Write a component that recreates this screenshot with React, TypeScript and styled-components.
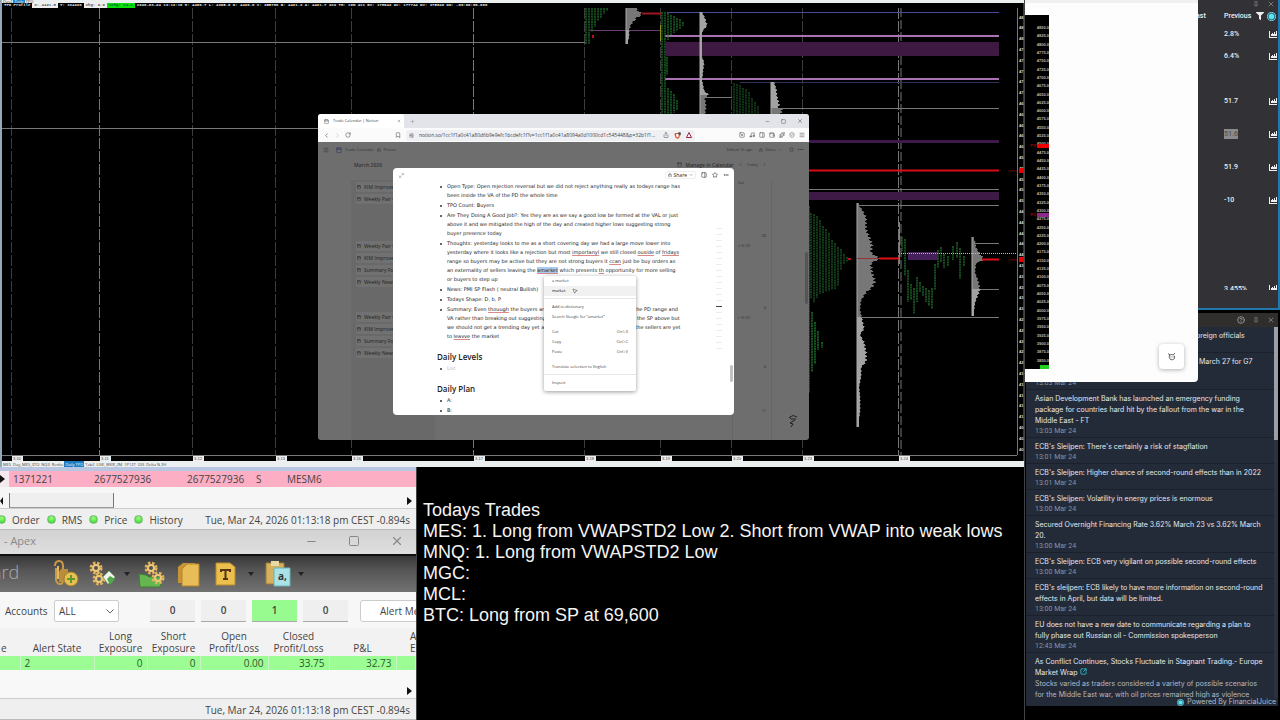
import React from "react";
import styled, { createGlobalStyle, css } from "styled-components";
import {
  Bookmark, Calendar, ChevronDown, ChevronLeft, ChevronRight, Ellipsis, Maximize2, Menu as MenuIcon, Minus,
  Music, PanelRight, Pin, Plus, RotateCw, Share, ShieldCheck, SlidersHorizontal, Sparkles, Square, SquareArrowOutUpRight,
  SquareX, Star, Wallet, X, CircleHelp, Lock, MousePointer2,
} from "lucide-react";
import { FaFilter } from "react-icons/fa";

const GlobalStyle = createGlobalStyle`
  * { box-sizing: border-box; }
  body { margin: 0; background: #000; font-family: "Open Sans", "Noto Sans", sans-serif; }
  button, select { font: inherit; color: inherit; }
  button { border: 0; padding: 0; background: none; display: inline-flex; align-items: center; }
  ul, p, h2, table { margin: 0; padding: 0; }
  ul { list-style: none; }
  svg { display: block; flex: none; }
`;

/* ---------- page frame ---------- */

const Desktop = styled.div`
  display: grid;
  grid-template-columns: minmax(0, 1fr) 256px;
  min-height: 100vh;
  background: #000;
`;

const LeftSide = styled.div`
  display: flex;
  flex-direction: column;
  min-width: 0;
`;

const LowerRow = styled.div`
  display: grid;
  grid-template-columns: 417px minmax(0, 1fr);
  flex: 1;
`;

/* ---------- profile chart ---------- */

const ChartPane = styled.section`
  position: relative;
  display: flex;
  flex-direction: column;
  border-left: 2px solid #93a9ba;
`;

const TabStrip = styled.div<{ $height: number }>`
  display: flex;
  align-items: center;
  height: ${(p) => p.$height}px;
  background: #ecefef;
  color: #444;
  font-size: 4px;
  line-height: 5px;
  overflow: hidden;
  white-space: nowrap;
`;

const SheetTab = styled.button<{ $active?: boolean }>`
  padding: 0 1px;
  height: 100%;
  ${(p) => p.$active && css`background: #1c7cc4; color: #fff;`}
`;

const ChartDrawing = styled.svg`
  width: 100%;
  height: 458px;
`;

const StatusLine = styled.div`
  position: absolute;
  top: 3px;
  left: 0;
  display: flex;
  height: 5px;
  font: bold 4px/5px "Liberation Mono", monospace;
  color: #e8e8e8;
  white-space: pre;
`;

const StatusCell = styled.span<{ $tone?: "white" | "green" }>`
  padding: 0 2px;
  ${(p) => p.$tone === "white" && css`background: #eee; color: #555;`}
  ${(p) => p.$tone === "green" && css`background: #08e008; color: #064;`}
`;

type Key = [number, number];

const widthAt = (keys: Key[], y: number) => {
  for (let i = 1; i < keys.length; i++) {
    if (y <= keys[i][0]) {
      const [y0, w0] = keys[i - 1];
      const [y1, w1] = keys[i];
      return w0 + ((w1 - w0) * (y - y0)) / (y1 - y0);
    }
  }
  return keys[keys.length - 1][1];
};

const volumePath = (x: number, keys: Key[]) => {
  const top = keys[0][0];
  const bottom = keys[keys.length - 1][0];
  let d = `M${x} ${top}`;
  for (let y = top; y < bottom; y += 1) {
    const base = widthAt(keys, y);
    const w = Math.max(2, base + Math.sin(y * 1.7) * Math.min(1.4, base * 0.12));
    d += `H${(x + w).toFixed(1)}V${y + 1}`;
  }
  return `${d}H${x}Z`;
};

const Volume = ({ x, keys, split }: { x: number; keys: Key[]; split: number }) => {
  const id = `vol${x}-${split}`;
  return (
    <g>
      <clipPath id={id}><rect x={x - 2} y={split} width="60" height="400" /></clipPath>
      <path d={volumePath(x, keys)} fill="#777" />
      <path d={volumePath(x, keys)} fill="#a2a2a2" clipPath={`url(#${id})`} />
      <line x1={x} x2={x} y1={keys[0][0]} y2={keys[keys.length - 1][0]} stroke="#aaa" />
    </g>
  );
};

const Letters = ({ columns, color = "#1d6b28" }: { columns: [number, number, number][]; color?: string }) => (
  <g stroke={color} strokeWidth="1.4" strokeDasharray="2 .6">
    {columns.map(([x, a, b], i) => <line key={i} x1={x} x2={x} y1={a} y2={b} />)}
  </g>
);

const sessions = [12, 100, 193, 276, 352, 474, 585, 661, 732, 803, 899];
const brightSessions = [100, 474, 899];
const sessionNames = ["3-10", "3-11", "3-12", "3-13", "3-16", "3-17", "3-18", "3-19", "3-20", "3-23", "3-24"];
const priceTicks = Array.from({ length: 41 }, (_, i) => ({ y: 17 + i * 10.8, label: String(48 - Math.round(i / 5)) }));

const monday: [number, number, number][] = [
  [811, 213, 298], [814, 214, 303], [817, 216, 298], [820, 220, 294], [823, 226, 293], [826, 229, 292], [829, 233, 291],
  [832, 240, 290], [835, 243, 289], [838, 247, 286], [841, 249, 270], [844, 254, 264], [847, 257, 262],
];
const tuesday: [number, number, number][] = [
  [902, 237, 251], [905, 239, 276], [908, 270, 302], [911, 284, 300], [914, 288, 314], [917, 277, 302], [920, 282, 292],
  [923, 286, 296], [926, 288, 302], [929, 290, 306], [932, 288, 309], [935, 264, 290], [938, 250, 268], [941, 247, 262],
  [944, 254, 268], [948, 256, 266], [953, 246, 260], [957, 242, 258], [960, 248, 279], [964, 256, 266],
];

const ProfileChart = () => (
  <ChartDrawing viewBox="2 3 1022 458" preserveAspectRatio="none" aria-label="TPO profile chart">
    <rect x="0" y="0" width="1024" height="461" fill="#000" />
    {sessions.map((x) => (
      <line key={x} x1={x - 0.5} x2={x - 0.5} y1="8" y2="455" stroke={brightSessions.includes(x) ? "#777" : "#3c3c3c"} strokeDasharray="11 2" />
    ))}
    <line x1="901" x2="901" y1="8" y2="455" stroke="#3c3c3c" strokeWidth="2" strokeDasharray="9 3" />
    <path d="M2 42.5H585M2 128.5H320" stroke="#777" />

    <rect x="666" y="42" width="333" height="14" fill="#3e1a42" />
    <rect x="740" y="140" width="259" height="3" fill="#3e1a4a" />
    <rect x="740" y="192" width="259" height="8" fill="#3e1a46" />
    <path d="M667 12.5H999" stroke="#4a4a9c" />
    <path d="M665 36H999M665 79H999" stroke="#a872b2" strokeWidth="2" />
    <path d="M740 82.5H999" stroke="#30305c" />
    <path d="M590 30.5H661" stroke="#6a3d70" />
    <path d="M702 97.5H732M771 108.5H999M808 189.5H999M857 205.5H999M857 317.5H999M974 243.5H999M974 289.5H999" stroke="#777" />
    <path d="M808 170.5H999" stroke="#d80d18" strokeWidth="2" />
    <path d="M642 13.5H661" stroke="#9a1a20" strokeWidth="2" />

    <Letters columns={[[586, 8, 44], [589, 8, 44], [592, 8, 32], [595, 8, 27], [598, 8, 21], [601, 8, 18], [604, 8, 14], [607, 8, 11]]} />
    <Letters columns={[[662, 12, 114], [665, 12, 114], [668, 13, 40], [671, 15, 35], [674, 16, 33], [677, 18, 31], [680, 19, 29], [683, 22, 26], [667, 57, 75], [668, 88, 114], [671, 91, 114], [674, 94, 113], [677, 100, 110]]} />
    <Letters color="#154a1e" columns={[[734, 83, 114], [737, 84, 114], [740, 85, 114], [743, 88, 114], [746, 89, 114], [749, 92, 114], [752, 98, 114], [755, 102, 114], [758, 106, 114]]} />
    <path d="M660.5 25V41" stroke="#8f8a1c" />
    <Letters color="#1f7a2e" columns={[[809, 206, 393], [812, 312, 372], [815, 322, 364], [818, 331, 350], [822, 342, 348]]} />
    <Letters columns={monday} color="#1a5524" />
    <Letters columns={tuesday} color="#216b2b" />
    <path d="M899.5 222V264" stroke="#5fa52c" />
    <rect x="908" y="252" width="30" height="8" fill="#45205a" />

    <Volume x={626} split={30} keys={[[8, 10], [12, 14], [14, 16], [17, 11], [24, 5], [30, 3], [36, 3], [44, 1]]} />
    <Volume x={700} split={0} keys={[[12, 2], [18, 5], [25, 7], [30, 3], [34, 1], [54, 1], [62, 4], [70, 3], [80, 2], [90, 4], [95, 9]]} />
    <Volume x={700} split={114} keys={[[95, 8], [98, 5], [106, 6], [114, 5]]} />
    <Volume x={771} split={0} keys={[[82, 3], [88, 5], [96, 6], [104, 8], [108, 7]]} />
    <Volume x={771} split={114} keys={[[108, 12], [112, 10], [114, 9]]} />
    <Volume x={857} split={317} keys={[[203, 0], [209, 5], [217, 9], [229, 9], [236, 12], [244, 15], [252, 14], [258, 22], [263, 14], [272, 15], [281, 18], [287, 15], [292, 9], [300, 4], [309, 3], [319, 5], [328, 7], [334, 3], [342, 7], [352, 9], [361, 9], [367, 4], [376, 4], [386, 2], [398, 3], [410, 3], [418, 2], [427, 0]]} />
    <Volume x={972} split={289} keys={[[237, 0], [241, 3], [247, 4], [252, 7], [259, 12], [263, 4], [272, 3], [280, 6], [289, 8], [294, 6], [302, 3], [316, 1]]} />
    <path d="M857 258.5H879" stroke="#9c3030" />
    <path d="M879 258.5H899M982 259.5H999" stroke="#e00f18" strokeWidth="2" />
    <path d="M899 253.5H1018" stroke="#b8b8b8" strokeDasharray="1 1" />
    <rect x="848" y="258" width="3" height="2" fill="#b1141c" />
    <rect x="592" y="35" width="2" height="3" fill="#b1141c" />

    <path d="M2 455.5H1017M1017.5 8V455M1024 3V461" stroke="#777" />
    {priceTicks.map((t) => <text key={t.y} x="1019" y={t.y + 1.5} fill="#ddd" fontSize="4" fontWeight="bold" fontFamily="Liberation Sans">{t.label}</text>)}
    <rect x="1019" y="168" width="5" height="5" fill="#e00" />
    <rect x="1019" y="257" width="5" height="5" fill="#e00" />
    <g fill="#a00" fontSize="4" fontFamily="Liberation Mono"><text x="1008" y="172">VPOC</text><text x="1008" y="261">VPOC</text></g>
    {sessions.map((x, i) => (
      <g key={x}>
        <rect x={x} y="456" width="11" height="5" fill="#eee" />
        <text x={x + 1} y="460" fill="#444" fontSize="4" fontFamily="Liberation Sans">{sessionNames[i]}</text>
      </g>
    ))}
  </ChartDrawing>
);

/* ---------- browser window ---------- */

const BrowserWindow = styled.section`
  position: absolute;
  top: 114px;
  left: 316px;
  width: 491px;
  height: 326px;
  display: flex;
  flex-direction: column;
  border-radius: 3px;
  overflow: hidden;
  background: #6e6e6e;
  color: #444;
  font-size: 4px;
  line-height: 6px;
`;

const TabBar = styled.div`
  display: flex;
  align-items: center;
  justify-content: space-between;
  height: 14px;
  background: #e3e4e9;
`;

const Group = styled.div<{ $gap: number; $pad?: string }>`
  display: flex;
  align-items: center;
  gap: ${(p) => p.$gap}px;
  padding: ${(p) => p.$pad ?? 0};
`;

const PageTab = styled.button`
  width: 86px;
  height: 14px;
  padding: 0 3px 0 6px;
  gap: 4px;
  background: #fff;
  border-radius: 3px 3px 0 0;
  svg:last-child { margin-left: auto; }
`;

const Toolbar = styled.div`
  display: flex;
  align-items: center;
  justify-content: space-between;
  height: 14px;
  padding: 0 4px 0 5px;
  background: #fbfbfc;
`;

const AddressBox = styled.div`
  display: flex;
  align-items: center;
  gap: 5px;
  width: 289px;
  height: 11px;
  padding: 0 3px;
  border-radius: 3px;
  background: #eff0f4;
  font-size: 5px;
  span { flex: 1; overflow: hidden; white-space: nowrap; text-overflow: ellipsis; }
`;

const Backdrop = styled.div`
  position: relative;
  flex: 1;
  display: flex;
  flex-direction: column;
  color: #333;
`;

const BackdropBar = styled.div<{ $pad: string }>`
  display: flex;
  align-items: center;
  justify-content: space-between;
  height: 15px;
  padding: ${(p) => p.$pad};
  strong { font-size: 5px; font-weight: 600; }
`;

const CalendarBoard = styled.div`
  display: flex;
  justify-content: space-between;
  flex: 1;
  padding: 8px 37px 0 33px;
`;

const EntryColumn = styled.ul`
  width: 84px;
  padding: 0 5px;
  background: #696969;
`;

const Entry = styled.li<{ $before?: number }>`
  display: flex;
  align-items: center;
  gap: 3px;
  height: 10px;
  margin-top: ${(p) => p.$before ?? 2}px;
  padding-left: 1px;
  color: #222;
  font-size: 5px;
  white-space: nowrap;
  background: #717171;
`;

const DayColumn = styled.ul`
  width: 40px;
  padding: 0 5px;
  border-left: 1px solid #666;
  border-right: 1px solid #666;
  text-align: right;
`;

const Day = styled.li<{ $height: number; $left?: boolean }>`
  height: ${(p) => p.$height}px;
  text-align: ${(p) => (p.$left ? "left" : "right")};
`;

const BackdropThumb = styled.div`
  position: absolute;
  top: 110px;
  right: 1px;
  width: 3px;
  height: 52px;
  border-radius: 2px;
  background: #555;
`;

const CornerIcon = styled.div`
  position: absolute;
  right: 11px;
  bottom: 12px;
`;

const PageModal = styled.article`
  position: absolute;
  top: 26px;
  left: 75px;
  width: 341px;
  height: 247px;
  overflow: hidden;
  border-radius: 4px;
  background: #fff;
  color: #222;
`;

const ModalBar = styled.header`
  display: flex;
  align-items: center;
  justify-content: space-between;
  height: 14px;
  padding: 0 5px 0 6px;
`;

const ShareButton = styled.button`
  gap: 2px;
  height: 8px;
  padding: 0 2px;
  border: 1px solid #eee;
  border-radius: 2px;
  font-size: 5px;
`;

const ModalBody = styled.div`
  padding: 0 44px;
  font-family: "DejaVu Sans", "Open Sans", sans-serif;
  font-size: 5px;
  line-height: 9px;
  h2 { font-family: "Open Sans", sans-serif; font-size: 8px; line-height: 10px; font-weight: 600; margin: 11px 0 2px; }
`;

const Bullets = styled.ul`
  display: flex;
  flex-direction: column;
  gap: 1px;
  li { position: relative; padding-left: 10px; white-space: pre; }
  li::before {
    content: "";
    position: absolute;
    left: 3px;
    top: 4px;
    width: 2px;
    height: 2px;
    border-radius: 1px;
    background: #333;
  }
`;

const Misspelt = styled.u`
  text-decoration: underline;
  text-decoration-color: #d88;
`;

const Selected = styled.mark`
  background: #a9cdf2;
  color: inherit;
  text-decoration: underline;
  text-decoration-color: #d88;
`;

const Placeholder = styled.span`
  color: #bbb;
`;

const Outline = styled.ul`
  position: absolute;
  top: 60px;
  right: 12px;
  display: flex;
  flex-direction: column;
  gap: 5px;
`;

const OutlineMark = styled.li<{ $active?: boolean }>`
  width: 6px;
  height: 1px;
  background: ${(p) => (p.$active ? "#444" : "#ececec")};
`;

const ModalThumb = styled.div`
  position: absolute;
  right: 1px;
  bottom: 33px;
  width: 3px;
  height: 17px;
  border-radius: 2px;
  background: #c2c2c2;
`;

const ContextMenu = styled.ul`
  position: absolute;
  top: 134px;
  left: 226px;
  width: 92px;
  height: 115px;
  background: #fff;
  color: #444;
  border-radius: 2px;
  box-shadow: 0 1px 4px rgba(0, 0, 0, 0.4);
`;

const MenuItem = styled.li<{ $hover?: boolean; $before?: number; $rule?: boolean }>`
  margin-top: ${(p) => p.$before ?? 0}px;
  ${(p) => p.$rule && css`border-top: 1px solid #e6e6e6; padding-top: 3px;`}
  button {
    width: 100%;
    height: 10px;
    padding: 0 8px;
    justify-content: space-between;
    background: ${(p) => (p.$hover ? "#f1f1f1" : "none")};
    color: ${(p) => (p.$hover ? "#000" : "inherit")};
  }
`;

const Pointer = styled.div`
  position: absolute;
  top: 146px;
  left: 254px;
`;

const url = "notion.so/1cc1f1a0c41a80d6b9e9efc1bcdefc1f?v=1cc1f1a0c41a8094a0d1000cd1c545448&p=32b1f1a0c41a8094";

const NotionWindow = () => (
  <BrowserWindow>
    <TabBar>
      <Group $gap={6}>
        <PageTab><Calendar size={5} />Trade Calendar | Notion<X size={4} /></PageTab>
        <button aria-label="New tab"><Plus size={5} color="#888" /></button>
      </Group>
      <Group $gap={11} $pad="0 6px 0 0"><Minus size={5} /><Square size={5} /><X size={6} /></Group>
    </TabBar>
    <Toolbar>
      <Group $gap={4}><ChevronLeft size={7} /><ChevronRight size={7} color="#bbb" /><RotateCw size={6} /></Group>
      <Group $gap={5}>
        <Bookmark size={6} />
        <AddressBox>
          <SlidersHorizontal size={5} /><span>{url}</span><Share size={6} />
          <svg width="7" height="7" viewBox="0 0 14 14"><path d="M2 2h10l1 4-3 6-3 2-4-3-2-6z" fill="#e4552c" /><path d="M4 4h6l-1 5-2 2-2-2z" fill="#fff" /><circle cx="11" cy="3" r="3" fill="#555" /></svg>
          <svg width="6" height="6" viewBox="0 0 12 12"><path d="M6 1 11 11H1Z" fill="#fff" stroke="#a32142" strokeWidth="2" /></svg>
        </AddressBox>
      </Group>
      <Group $gap={4}><SquareX size={6} /><Music size={6} /><PanelRight size={6} /><Wallet size={6} /><Sparkles size={6} /><ShieldCheck size={6} /><MenuIcon size={6} /></Group>
    </Toolbar>
    <Backdrop>
      <BackdropBar $pad="0 5px 0 5px">
        <Group $gap={3}><MenuIcon size={6} /><Group $gap={3} $pad="0 0 0 4px"><Calendar size={6} color="#2a3060" />Trade Calendar<Lock size={4} />Private</Group></Group>
        <Group $gap={3}><span>Edited 1h ago</span><Group $gap={2} $pad="0 4px"><Lock size={4} />Share<ChevronDown size={4} /></Group><Star size={5} /><Ellipsis size={7} /></Group>
      </BackdropBar>
      <BackdropBar $pad="0 42px 0 36px">
        <strong>March 2026</strong>
        <Group $gap={4}><Calendar size={5} /><strong>Manage in Calendar</strong><ChevronLeft size={5} /><span>Today</span><ChevronRight size={5} /></Group>
      </BackdropBar>
      <CalendarBoard>
        <EntryColumn>
          <Entry><Calendar size={4} />KIM Improvement</Entry>
          <Entry><Calendar size={4} />Weekly Pair Outlook</Entry>
          <Entry $before={37}><Calendar size={4} />Weekly Pair Outlook</Entry>
          <Entry><Calendar size={4} />KIM Improvement</Entry>
          <Entry><Calendar size={4} />Summary For Week</Entry>
          <Entry><Calendar size={4} />Weekly News</Entry>
          <Entry $before={25}><Calendar size={4} />Weekly Pair Outlook</Entry>
          <Entry><Calendar size={4} />KIM Improvement</Entry>
          <Entry><Calendar size={4} />Summary For Week</Entry>
          <Entry><Calendar size={4} />Weekly News</Entry>
        </EntryColumn>
        <DayColumn>
          <Day $height={53} $left>Sat</Day>
          <Day $height={10}>28</Day>
          <Day $height={62} $left>s % (3)</Day>
          <Day $height={10}>4</Day>
          <Day $height={49} $left>r % (2)</Day>
          <Day $height={44}>4</Day>
          <Day $height={8}>11</Day>
        </DayColumn>
      </CalendarBoard>
      <BackdropThumb />
      <CornerIcon><svg width="10" height="14" viewBox="0 0 10 14" fill="none" stroke="#222"><path d="M2 3q3-3 7 0M3 5h5M7 6 2 9l3 1-2 3M1 3l2 2" /></svg></CornerIcon>
      <PageModal>
        <ModalBar>
          <Maximize2 size={5} color="#777" />
          <Group $gap={5}><ShareButton><Lock size={4} />Share<ChevronDown size={4} /></ShareButton><PanelRight size={6} /><Star size={6} /><Ellipsis size={6} /></Group>
        </ModalBar>
        <ModalBody>
          <Bullets>
            <li>{"Open Type: Open rejection reversal but we did not reject anything really as todays range has\nbeen inside the VA of the PD the whole time"}</li>
            <li>TPO Count: Buyers</li>
            <li>{"Are They Doing A Good Job?: Yes they are as we say a good low be formed at the VAL or just\nabove it and we mitigated the high of the day and created higher lows suggesting strong\nbuyer presence today"}</li>
            <li>
              {"Thoughts: yesterday looks to me as a short covering day we had a large move lower into\nyesterday where it looks like a rejection but most "}<Misspelt>importanyl</Misspelt>{" we still closed "}<Misspelt>ouside</Misspelt>{" of "}<Misspelt>fridays</Misspelt>
              {"\nrange so buyers may be active but they are not strong buyers it "}<Misspelt>ccan</Misspelt>{" just be buy orders as\nan externality of sellers leaving the "}<Selected>amarket</Selected>{" which presents "}<Misspelt>th</Misspelt>{" opportunity for more selling\nor buyers to step up"}
            </li>
            <li>News: PMI SP Flash ( neutral Bullish)</li>
            <li>Todays Shape: D, b, P</li>
            <li>{"Summary: Even "}<Misspelt>thouugh</Misspelt>{" the buyers are in control we are still inside all of  the PD range and\nVA rather than breaking out suggesting that we may see more chop or test the SP above but\nwe should not get a trending day yet as it seems that both the buyers and the sellers are yet\nto "}<Misspelt>leavve</Misspelt>{" the market"}</li>
          </Bullets>
          <h2>Daily Levels</h2>
          <Bullets><li><Placeholder>List</Placeholder></li></Bullets>
          <h2>Daily Plan</h2>
          <Bullets><li>A:</li><li>B:</li></Bullets>
        </ModalBody>
        <Outline>{Array.from({ length: 21 }, (_, i) => <OutlineMark key={i} $active={i === 13} />)}</Outline>
        <ModalThumb />
      </PageModal>
      <ContextMenu>
        <MenuItem><button>a market</button></MenuItem>
        <MenuItem $hover><button>market</button></MenuItem>
        <MenuItem $rule $before={2}><button>Add to dictionary</button></MenuItem>
        <MenuItem><button>Search Google for “amarket”</button></MenuItem>
        <MenuItem $before={5}><button><span>Cut</span><span>Ctrl+X</span></button></MenuItem>
        <MenuItem><button><span>Copy</span><span>Ctrl+C</span></button></MenuItem>
        <MenuItem><button><span>Paste</span><span>Ctrl+V</span></button></MenuItem>
        <MenuItem $before={5}><button>Translate selection to English</button></MenuItem>
        <MenuItem $rule $before={2}><button>Inspect</button></MenuItem>
      </ContextMenu>
      <Pointer><MousePointer2 size={6} fill="#fff" color="#333" /></Pointer>
    </Backdrop>
  </BrowserWindow>
);

/* ---------- order window and dashboard ---------- */

const Apex = styled.section`
  display: flex;
  flex-direction: column;
  min-width: 0;
  overflow: hidden;
  border-right: 1px solid #444;
  background: #f8f8f8;
  color: #444;
  font-size: 10px;
  line-height: 12px;
  white-space: nowrap;
`;

const OrderTable = styled.table`
  width: 100%;
  table-layout: fixed;
  border-collapse: collapse;
  td { padding: 0 0 0 4px; height: 16px; background: #fcaec5; overflow: hidden; }
  td:first-child { padding: 0; background: #f5e9ee; }
  tr:first-child td { height: 4px; background: #b9c6e2; }
`;

const ScrollTrack = styled.div`
  display: flex;
  justify-content: space-between;
  align-items: center;
  height: 22px;
  padding: 6px 4px 0 0;
  background: #f6f6f6;
  border-bottom: 1px solid #ccc;
`;

const ScrollThumb = styled.div`
  width: 105px;
  height: 15px;
  margin-left: 4px;
  background: #efefef;
  border-left: 1px solid #777;
  border-right: 1px solid #777;
  border-bottom: 1px solid #999;
`;

const Arrow = styled.svg`
  width: 5px;
  height: 8px;
  fill: #111;
`;

const StatusBar = styled.div`
  display: flex;
  align-items: center;
  justify-content: space-between;
  height: 21px;
  padding: 1px 6px 0 0;
  background: #efefef;
  border-bottom: 1px solid #bbb;
`;

const Feeds = styled.div`
  display: flex;
  gap: 7px;
  margin-left: -3px;
`;

const Feed = styled.span`
  display: flex;
  align-items: center;
  gap: 6px;
`;

const Dot = styled.i`
  width: 9px;
  height: 9px;
  border-radius: 5px;
  background: radial-gradient(circle at 50% 30%, #9dff7c, #28cf28);
  border: 1px solid #7ab87a;
`;

const TitleBar = styled.div`
  display: flex;
  align-items: center;
  justify-content: space-between;
  height: 26px;
  padding: 0 12px 2px 4px;
  background: linear-gradient(#d2d2d2, #dedede);
  border-bottom: 2px solid #111;
  color: #888;
  font-size: 11px;
`;

const IconBar = styled.div`
  display: flex;
  align-items: center;
  height: 36px;
  background: linear-gradient(#383838, #565656 40%, #727272);
  color: #aaa;
  b { width: 52px; margin-left: -8px; margin-right: 8px; font-size: 18px; font-weight: 300; line-height: 20px; padding-bottom: 4px; }
`;

const Tool = styled.button<{ $after: number }>`
  margin-right: ${(p) => p.$after}px;
`;

const AccountRow = styled.div`
  display: flex;
  align-items: center;
  height: 36px;
  padding: 2px 0 0 5px;
  background: #f7f7f7;
  > * { flex: none; }
  label { width: 49px; }
  select {
    width: 65px;
    height: 22px;
    margin-right: 31px;
    padding: 0 14px 0 4px;
    border: 1px solid #ccc;
    border-radius: 2px;
    appearance: none;
    background: #fff url("data:image/svg+xml,%3Csvg xmlns='http://www.w3.org/2000/svg' width='8' height='5' fill='none' stroke='%23666'%3E%3Cpath d='M0.5 0.5 4 4 7.5 0.5'/%3E%3C/svg%3E") no-repeat right 4px center;
  }
`;

const CountBox = styled.output<{ $on?: boolean }>`
  width: 45px;
  height: 22px;
  margin-right: 6px;
  padding-top: 4px;
  text-align: center;
  font-weight: 600;
  background: ${(p) => (p.$on ? "#97fb8f" : "#efefef")};
  border-bottom: 1px solid #aaa;
`;

const AlertButton = styled.button`
  width: 90px;
  height: 22px;
  margin-left: 6px;
  padding-left: 19px;
  border: 1px solid #ccc;
  border-radius: 3px;
  background: #fff;
`;

const AccountTable = styled.table`
  width: 100%;
  table-layout: fixed;
  border-collapse: collapse;
  th { height: 28px; padding: 0 0 2px; font-weight: 400; vertical-align: bottom; background: #f2f2f2; overflow: hidden; line-height: 12px; white-space: pre; }
  th:first-child { text-align: left; padding-left: 1px; }
  th:last-child { text-align: left; padding-left: 14px; }
  td { height: 14px; padding: 0 4px; text-align: right; background: #9bfd93; border-right: 1px solid #c8f5c4; color: #2c5a2c; }
  td:nth-child(2) { text-align: left; }
`;

const GridRest = styled.div`
  display: flex;
  justify-content: flex-end;
  align-items: flex-end;
  flex: 1;
  padding: 0 4px 3px 0;
  border-bottom: 1px solid #ccc;
`;

const clock = "Tue, Mar 24, 2026 01:13:18 pm CEST -0.894s";

const Gear = ({ x, y, r }: { x: number; y: number; r: number }) => (
  <g>
    <circle cx={x} cy={y} r={r} fill="none" stroke="#e2b35c" strokeWidth="3" strokeDasharray="2.4 1.6" />
    <circle cx={x} cy={y} r={r - 2} fill="none" stroke="#edc878" strokeWidth="2" />
  </g>
);

const Caret = () => <svg width="6" height="4" viewBox="0 0 6 4"><path d="M0 0h6L3 4z" fill="#222" /></svg>;

const ApexPanel = () => (
  <Apex>
    <OrderTable>
      <colgroup><col width="9" /><col width="81" /><col width="93" /><col width="69" /><col width="31" /><col /></colgroup>
      <tbody>
        <tr><td /><td /><td /><td /><td /><td /></tr>
        <tr><td><Arrow viewBox="0 0 5 8"><path d="M0 0 5 4 0 8z" /></Arrow></td><td>1371221</td><td>2677527936</td><td>2677527936</td><td>S</td><td>MESM6</td></tr>
      </tbody>
    </OrderTable>
    <ScrollTrack>
      <Group $gap={0}><Arrow viewBox="0 0 5 8"><path d="M3 0 0 4l3 4z" /></Arrow><ScrollThumb /></Group>
      <Arrow viewBox="0 0 5 8"><path d="M0 0 5 4 0 8z" /></Arrow>
    </ScrollTrack>
    <StatusBar>
      <Feeds>
        <Feed><Dot />Order</Feed><Feed><Dot />RMS</Feed><Feed><Dot />Price</Feed><Feed><Dot />History</Feed>
      </Feeds>
      <span>{clock}</span>
    </StatusBar>
    <TitleBar>
      <span>- Apex</span>
      <Group $gap={30}>
        <button aria-label="Minimize"><Minus size={13} strokeWidth={2} /></button>
        <button aria-label="Maximize"><Square size={12} strokeWidth={2} /></button>
        <button aria-label="Close"><X size={14} strokeWidth={2} /></button>
      </Group>
    </TitleBar>
    <IconBar>
      <b>ard</b>
      <Tool $after={8} aria-label="Attach">
        <svg width="28" height="28" viewBox="0 0 28 28"><path d="M3 6q0-5 4-5t4 5v14q0 4-3 4t-4-4V8" fill="none" stroke="#c99a45" strokeWidth="2" /><path d="M9 9h7v13H7V12z" fill="#b98d3c" /><path d="M6 6v13" stroke="#e0b764" strokeWidth="2" /><circle cx="19" cy="19" r="7" fill="#e8bf55" stroke="#a27c22" /><path d="M15 19h8M19 15v8" stroke="#5f9a30" strokeWidth="2" /></svg>
      </Tool>
      <Tool $after={8} aria-label="Export settings">
        <svg width="28" height="28" viewBox="0 0 28 28"><Gear x={8} y={8} r={5} /><Gear x={11} y={19} r={5} /><path d="m15 17 6-6 6 6-7 7z" fill="#f1f5ee" stroke="#8ab87c" /><path d="m19 19 3-3 5 3-5 6z" fill="#52a54a" /></svg>
      </Tool>
      <Tool $after={8} aria-label="More exports"><Caret /></Tool>
      <Tool $after={10} aria-label="Import settings">
        <svg width="28" height="28" viewBox="0 0 28 28"><path d="m1 14 7 1 3 2h14l-3 10H2z" fill="#64b64e" stroke="#3d8132" /><Gear x={13} y={8} r={5} /><Gear x={20} y={18} r={5} /></svg>
      </Tool>
      <Tool $after={14} aria-label="Copy">
        <svg width="24" height="26" viewBox="0 0 24 26"><path d="M2 6 7 2h12v20H2z" fill="#c89536" /><path d="m6 8 5-5h12v22H6z" fill="#e8bd58" stroke="#b58428" /></svg>
      </Tool>
      <Tool $after={12} aria-label="Template">
        <svg width="22" height="24" viewBox="0 0 22 24"><path d="M2 1h14l5 4v18H2z" fill="#eabf4e" stroke="#b98c28" /><path d="M7 10V8h9v2M11.5 8v9M9 17h5" fill="none" stroke="#56360f" strokeWidth="2" /></svg>
      </Tool>
      <Tool $after={10} aria-label="Template menu"><Caret /></Tool>
      <Tool $after={6} aria-label="Paste">
        <svg width="28" height="28" viewBox="0 0 28 28"><path d="M2 3h18v21H2z" fill="#d5b05f" stroke="#9d7a32" /><path d="M7 1h8v5H7z" fill="#e8d9a0" /><path d="M10 8h16v18H10z" fill="#a9e3e6" stroke="#6bb4bb" /><text x="14" y="20" fontSize="10" fontWeight="bold" fill="#333">a,</text></svg>
      </Tool>
      <Tool $after={0} aria-label="Paste menu"><Caret /></Tool>
    </IconBar>
    <AccountRow>
      <label htmlFor="accounts">Accounts</label>
      <select id="accounts"><option>ALL</option></select>
      <CountBox>0</CountBox><CountBox>0</CountBox><CountBox $on>1</CountBox><CountBox>0</CountBox>
      <AlertButton>Alert Messages</AlertButton>
    </AccountRow>
    <AccountTable>
      <colgroup><col width="20" /><col width="74" /><col width="53" /><col width="53" /><col width="68" /><col width="61" /><col width="67" /><col /></colgroup>
      <thead><tr><th>e</th><th>Alert State</th><th>{"Long\nExposure"}</th><th>{"Short\nExposure"}</th><th>{"Open\nProfit/Loss"}</th><th>{"Closed\nProfit/Loss"}</th><th>P&amp;L</th><th>{"A\nE"}</th></tr></thead>
      <tbody><tr><td /><td>2</td><td>0</td><td>0</td><td>0.00</td><td>33.75</td><td>32.73</td><td /></tr></tbody>
    </AccountTable>
    <GridRest><Arrow viewBox="0 0 5 8"><path d="M0 0 5 4 0 8z" /></Arrow></GridRest>
    <StatusBar><span /><span>{clock}</span></StatusBar>
  </Apex>
);

/* ---------- notes ---------- */

const Notes = styled.section`
  padding: 33px 0 0 6px;
  background: #000;
  color: #f4f4f4;
  font: 18px/21px "Liberation Sans", Arial, sans-serif;
  white-space: nowrap;
  overflow: hidden;
`;

/* ---------- right column ---------- */

const RightSide = styled.aside`
  position: relative;
  display: flex;
  flex-direction: column;
  padding: 0 0 0 1px;
  border-left: 1px solid #444;
  font-family: Roboto, "Liberation Sans", sans-serif;
`;

const EconomicPanel = styled.section`
  height: 310px;
  background: #323135;
  border-right: 2px solid #2277ab;
  border-bottom: 2px solid #2277ab;
  color: #eee;
  overflow: hidden;
`;

const PanelBar = styled.div<{ $height: number }>`
  display: flex;
  align-items: center;
  justify-content: flex-end;
  gap: 8px;
  height: ${(p) => p.$height}px;
  padding: 0 3px;
  color: #999;
`;

const EventTable = styled.table`
  width: 100%;
  table-layout: fixed;
  border-collapse: collapse;
  font-size: 7px;
  line-height: 8px;
  font-weight: 500;
  text-align: left;
  th, td { padding: 0; font-weight: 500; }
  td:last-child svg { margin-left: auto; }
`;

const EventRow = styled.tr<{ $height: number }>`
  height: ${(p) => p.$height}px;
`;

const Flash = styled.span`
  display: inline-block;
  padding: 1px 0;
  background: #8b8b8b;
  color: #555;
`;

const ClippedRow = styled.div`
  display: flex;
  justify-content: space-between;
  height: 6px;
  margin-top: 68px;
  padding-left: 198px;
  font-size: 7px;
  line-height: 10px;
  font-weight: 500;
  overflow: hidden;
`;

const NewsPanel = styled.section`
  display: flex;
  flex-direction: column;
  height: 393px;
  margin: 3px 2px 0 0;
  background: #232b38;
  overflow: hidden;
`;

const NewsBar = styled(PanelBar)`
  background: #302e2d;
  flex: none;
`;

const NewsList = styled.ul`
  flex: 1;
  min-height: 0;
  overflow: hidden;
  border-right: 4px solid #2c3340;
`;

const NewsItem = styled.li<{ $indent?: number }>`
  padding: 3px 0 1px 9px;
  border-bottom: 1px solid #1a212c;
  p {
    padding-left: ${(p) => p.$indent ?? 0}px;
    font: 7px/11px Inter, "Liberation Sans", sans-serif;
    color: #e4e8ee;
    white-space: pre;
  }
  time { display: block; font-size: 7px; line-height: 10px; color: #8b93a1; }
  a { display: inline-block; color: #29c4cf; }
`;

const Summary = styled.div`
  font: 7px/11px Inter, "Liberation Sans", sans-serif;
  color: #b3bac5;
  white-space: pre;
`;

const Credit = styled.a`
  display: flex;
  justify-content: flex-end;
  align-items: center;
  gap: 3px;
  flex: none;
  height: 8px;
  padding-right: 2px;
  color: #b7bdc7;
  font: 7px/8px Inter, "Liberation Sans", sans-serif;
  text-decoration: none;
`;

const NewsThumb = styled.div`
  position: absolute;
  top: 327px;
  right: 2px;
  width: 4px;
  height: 113px;
  background: #9aa0aa;
`;

const LadderWindow = styled.section`
  position: absolute;
  top: 0;
  left: 0;
  width: 173px;
  height: 382px;
  border-radius: 0 0 4px 0;
  background: #fdfdfd;
  border-top: 3px solid #f0f0f0;
  padding-top: 12px;
`;

const Ladder = styled.ul`
  position: relative;
  display: flex;
  flex-direction: column;
  justify-content: space-between;
  align-items: flex-end;
  width: 24px;
  height: 354px;
  padding: 10px 0 6px;
  background: #000;
  color: #bbb;
  font: bold 4px/5px "Liberation Sans", sans-serif;
`;

const LadderMark = styled.li<{ $top: number; $color: string; $wide: number }>`
  position: absolute;
  top: ${(p) => p.$top}px;
  right: 0;
  width: ${(p) => p.$wide}px;
  height: 4px;
  background: ${(p) => p.$color};
`;

const LadderNote = styled.li<{ $top: number }>`
  position: absolute;
  top: ${(p) => p.$top}px;
  right: 13px;
  color: #a00;
`;

const FloatingButton = styled.button`
  position: absolute;
  right: 14px;
  bottom: 13px;
  width: 25px;
  height: 25px;
  justify-content: center;
  border-radius: 4px;
  background: #fff;
  box-shadow: 0 1px 4px rgba(0, 0, 0, 0.3);
`;

const Bars = () => (
  <svg width="9" height="8" viewBox="0 0 9 8" fill="#eee"><path d="M0 1h1v6h7v1H0zM2 4h1V3h1v1h1V2h1v2h1V1h1v5H2z" /></svg>
);
const Juice = ({ size }: { size: number }) => (
  <svg width={size} height={size} viewBox="0 0 10 10"><circle cx="5" cy="5" r="4.5" fill="#1c6f80" stroke="#8ed6df" /><circle cx="5" cy="5" r="3" fill="#5fe3ee" /></svg>
);

const headlines: { title: string; time: string; indent?: number }[] = [
  { title: "oreign officials", time: "13:05 Mar 24", indent: 161 },
  { title: "March 27 for G7\n ", time: "13:03 Mar 24", indent: 164 },
  { title: "Asian Development Bank has launched an emergency funding\npackage for countries hard hit by the fallout from the war in the\nMiddle East - FT", time: "13:03 Mar 24" },
  { title: "ECB's Sleijpen: There's certainly a risk of stagflation", time: "13:01 Mar 24" },
  { title: "ECB's Sleijpen: Higher chance of second-round effects than in 2022", time: "13:01 Mar 24" },
  { title: "ECB's Sleijpen: Volatility in energy prices is enormous", time: "13:00 Mar 24" },
  { title: "Secured Overnight Financing Rate 3.62% March 23 vs 3.62% March\n20.", time: "13:00 Mar 24" },
  { title: "ECB's Sleijpen: ECB very vigilant on possible second-round effects", time: "13:00 Mar 24" },
  { title: "ECB's sleijpen: ECB likely to have more information on second-round\neffects in April, but data will be limited.", time: "13:00 Mar 24" },
  { title: "EU does not have a new date to communicate regarding a plan to\nfully phase out Russian oil - Commission spokesperson", time: "12:43 Mar 24" },
];

const FeedColumn = () => (
  <RightSide>
    <EconomicPanel>
      <PanelBar $height={8}><Pin size={6} /><X size={8} /></PanelBar>
      <EventTable>
        <colgroup><col /><col width="28" /><col width="32" /><col width="22" /></colgroup>
        <thead><EventRow $height={16}><th /><th>ast</th><th>Previous</th><th><Group $gap={3}><FaFilter size={8} /><Juice size={9} /></Group></th></EventRow></thead>
        <tbody>
          <EventRow $height={20}><td /><td /><td>2.8%</td><td><Bars /></td></EventRow>
          <EventRow $height={24}><td /><td /><td>6.4%</td><td><Bars /></td></EventRow>
          <EventRow $height={16}><td /><td /><td /><td /></EventRow>
          <EventRow $height={33}><td /><td /><td>51.7</td><td><Bars /></td></EventRow>
          <EventRow $height={33}><td /><td /><td><Flash>51.6</Flash></td><td><Bars /></td></EventRow>
          <EventRow $height={33}><td /><td /><td>51.9</td><td><Bars /></td></EventRow>
          <EventRow $height={33}><td /><td /><td>-10</td><td><Bars /></td></EventRow>
        </tbody>
      </EventTable>
      <ClippedRow><span>3.455%</span><Bars /></ClippedRow>
    </EconomicPanel>
    <NewsPanel>
      <NewsBar $height={14}><CircleHelp size={8} color="#bbb" /><Pin size={6} /><X size={8} /></NewsBar>
      <NewsList>
        {headlines.map((h) => (
          <NewsItem key={h.title} $indent={h.indent}><p>{h.title}</p><time>{h.time}</time></NewsItem>
        ))}
        <NewsItem>
          <p>{"As Conflict Continues, Stocks Fluctuate in Stagnant Trading.- Europe\nMarket Wrap "}<a href="#wrap" aria-label="Open article"><SquareArrowOutUpRight size={7} strokeWidth={3} /></a></p>
          <Summary>{"Stocks varied as traders considered a variety of possible scenarios\nfor the Middle East war, with oil prices remained high as violence"}</Summary>
        </NewsItem>
      </NewsList>
      <Credit href="#financialjuice"><Juice size={7} />Powered By FinancialJuice</Credit>
    </NewsPanel>
    <NewsThumb />
    <LadderWindow>
      <Ladder>
        {Array.from({ length: 41 }, (_, i) => <li key={i}>{(4850 - i * 25).toFixed(1)}</li>)}
        <LadderMark $top={129} $wide={12} $color="#e00" />
        <LadderMark $top={198} $wide={12} $color="#8c2a8c" />
        <LadderMark $top={350} $wide={9} $color="#1fd01f" />
        <LadderNote $top={128}>PO</LadderNote>
        <LadderNote $top={197}>PO</LadderNote>
      </Ladder>
      <FloatingButton aria-label="Assistant">
        <svg width="9" height="9" viewBox="0 0 18 18" fill="none" stroke="#333" strokeWidth="1.5"><path d="M2 4q3-1 4 2 4-2 6 0l4-4M5 6q-2 6 2 9 5 2 8-2 1-3-1-6M8 9v2M12 9v2" /></svg>
      </FloatingButton>
    </LadderWindow>
  </RightSide>
);

export default function App() {
  return (
    <Desktop>
      <GlobalStyle />
      <LeftSide>
        <ChartPane>
          <TabStrip $height={3}><SheetTab>Day2</SheetTab><SheetTab $active>Daily</SheetTab><SheetTab>TPO</SheetTab></TabStrip>
          <ProfileChart />
          <StatusLine>
            <StatusCell>TPO Profile</StatusCell><StatusCell $tone="white">C: 4421.5</StatusCell><StatusCell>T: 334220</StatusCell>
            <StatusCell $tone="white">Chg: 0.0</StatusCell><StatusCell $tone="green">%Chg: 14.1</StatusCell>
            <StatusCell>2026-03-24 13:13:18 H: 4460.7 L: 4305.0 O: 4420.0 V: 355786 B: 4421.3 A: 4421.7 2x2 TR: 10m 41s BV: 178042 AV: 177744 DV: 375846 DD: -00:00:00.000</StatusCell>
          </StatusLine>
          <TabStrip $height={6}>
            <SheetTab>MES</SheetTab><SheetTab>Day_MES_3TO</SheetTab><SheetTab>NQ3</SheetTab><SheetTab>Renko</SheetTab><SheetTab $active>Daily TPO</SheetTab>
            <SheetTab>Tab2</SheetTab><SheetTab>LIVE_WKR_2M</SheetTab><SheetTab>1P12T</SheetTab><SheetTab>OIS</SheetTab><SheetTab>Delta N 2H</SheetTab>
          </TabStrip>
          <NotionWindow />
        </ChartPane>
        <LowerRow>
          <ApexPanel />
          <Notes>
            <p>Todays Trades</p>
            <p>MES: 1. Long from VWAPSTD2 Low 2. Short from VWAP into weak lows</p>
            <p>MNQ: 1. Long from VWAPSTD2 Low</p>
            <p>MGC:</p>
            <p>MCL:</p>
            <p>BTC: Long from SP at 69,600</p>
          </Notes>
        </LowerRow>
      </LeftSide>
      <FeedColumn />
    </Desktop>
  );
}
